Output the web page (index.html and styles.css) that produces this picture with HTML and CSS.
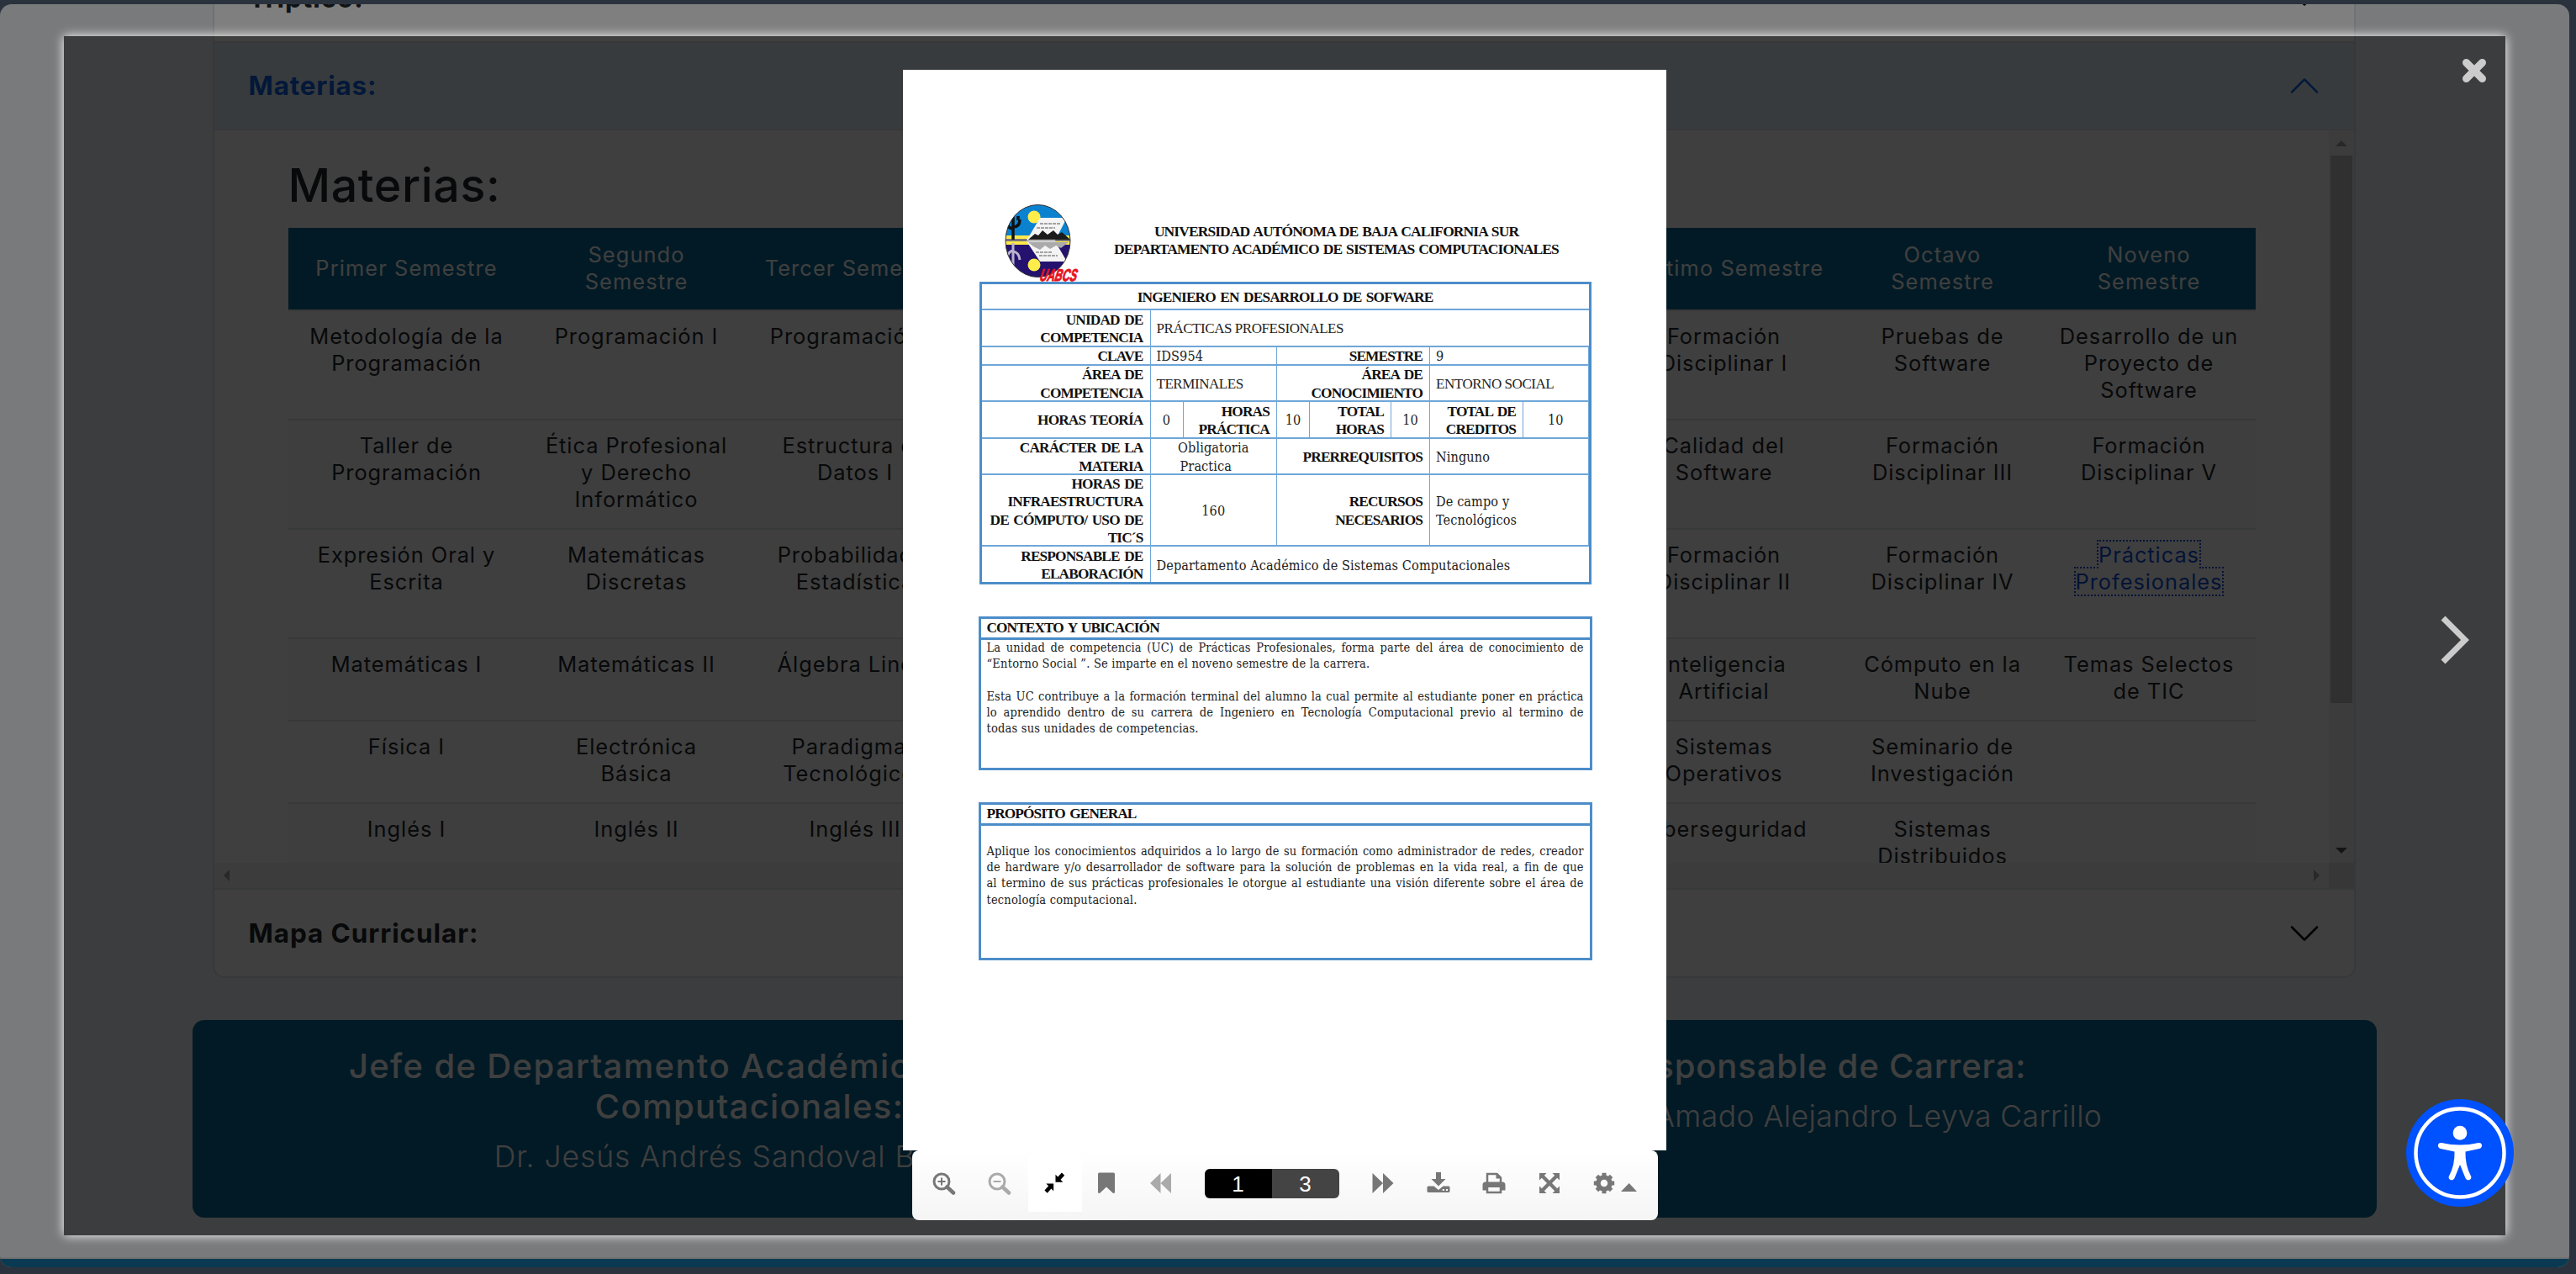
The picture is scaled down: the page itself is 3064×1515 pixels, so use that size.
FILE: index.html
```html
<!DOCTYPE html>
<html lang="es">
<head>
<meta charset="utf-8">
<title>Materias</title>
<link rel="stylesheet" href="styles.css">
</head>
<body>
<div class="site">
  <main class="page">
    <section class="accordion">
      <div class="acc-head"><span>Tríptico:</span>
        <svg class="chev" viewBox="0 0 16 16"><path d="M1.646 4.646a.5.5 0 0 1 .708 0L8 10.293l5.646-5.647a.5.5 0 0 1 .708.708l-6 6a.5.5 0 0 1-.708 0l-6-6a.5.5 0 0 1 0-.708z"/></svg>
      </div>
      <div class="acc-head open"><span>Materias:</span>
        <svg class="chev" viewBox="0 0 16 16"><path d="M1.646 4.646a.5.5 0 0 1 .708 0L8 10.293l5.646-5.647a.5.5 0 0 1 .708.708l-6 6a.5.5 0 0 1-.708 0l-6-6a.5.5 0 0 1 0-.708z"/></svg>
      </div>
      <div class="scroller">
        <div class="content">
          <h2>Materias:</h2>
          <table class="plan">
            <colgroup><col class="c1"><col class="c2"><col class="c3"><col class="c3"><col class="c3"><col class="c3"><col class="c7"><col class="c8"><col class="c9"></colgroup>
            <thead><tr><th>Primer Semestre</th><th>Segundo<br>Semestre</th><th>Tercer Semestre</th><th></th><th></th><th></th><th>Séptimo Semestre</th><th>Octavo<br>Semestre</th><th>Noveno<br>Semestre</th></tr></thead>
            <tbody>
              <tr class="tall"><td>Metodología de la<br>Programación</td><td>Programación I</td><td>Programación II</td><td></td><td></td><td></td><td>Formación<br>Disciplinar I</td><td>Pruebas de<br>Software</td><td>Desarrollo de un<br>Proyecto de<br>Software</td></tr>
              <tr class="tall"><td>Taller de<br>Programación</td><td>Ética Profesional<br>y Derecho<br>Informático</td><td>Estructura de<br>Datos I</td><td></td><td></td><td></td><td>Calidad del<br>Software</td><td>Formación<br>Disciplinar III</td><td>Formación<br>Disciplinar V</td></tr>
              <tr class="tall"><td>Expresión Oral y<br>Escrita</td><td>Matemáticas<br>Discretas</td><td>Probabilidad y<br>Estadística</td><td></td><td></td><td></td><td>Formación<br>Disciplinar II</td><td>Formación<br>Disciplinar IV</td><td><a class="focus" href="#">Prácticas<br>Profesionales</a></td></tr>
              <tr><td>Matemáticas I</td><td>Matemáticas II</td><td>Álgebra Lineal</td><td></td><td></td><td></td><td>Inteligencia<br>Artificial</td><td>Cómputo en la<br>Nube</td><td>Temas Selectos<br>de TIC</td></tr>
              <tr><td>Física I</td><td>Electrónica<br>Básica</td><td>Paradigmas<br>Tecnológicos</td><td></td><td></td><td></td><td>Sistemas<br>Operativos</td><td>Seminario de<br>Investigación</td><td></td></tr>
              <tr><td>Inglés I</td><td>Inglés II</td><td>Inglés III</td><td></td><td></td><td></td><td>Ciberseguridad</td><td>Sistemas<br>Distribuidos</td><td></td></tr>
            </tbody>
          </table>
        </div>
        <div class="vbar"><i class="up"></i><b></b><i class="down"></i></div>
        <div class="hbar"><i class="left"></i><i class="right"></i></div>
        <div class="corner"></div>
      </div>
      <div class="acc-head last"><span>Mapa Curricular:</span>
        <svg class="chev" viewBox="0 0 16 16"><path d="M1.646 4.646a.5.5 0 0 1 .708 0L8 10.293l5.646-5.647a.5.5 0 0 1 .708.708l-6 6a.5.5 0 0 1-.708 0l-6-6a.5.5 0 0 1 0-.708z"/></svg>
      </div>
    </section>
    <section class="staff">
      <div class="person"><h4>Jefe de Departamento Académico de Sistemas<br>Computacionales:</h4><p>Dr. Jesús Andrés Sandoval Bringas</p></div>
      <div class="person lead"><h4>Responsable de Carrera:</h4><p>Dr. Italia Amado Alejandro Leyva Carrillo</p></div>
    </section>
    <div class="footer-line"></div>
  </main>
</div>
<div class="dim"></div>
<div class="lightbox">
  <article class="doc">
    <header class="doc-header">
      <svg class="logo" viewBox="0 0 110 100">
        <defs><clipPath id="oval"><ellipse cx="49.500" cy="48.500" rx="38.500" ry="43"/></clipPath></defs>
        <g clip-path="url(#oval)">
          <rect width="110" height="47" fill="#0a82d0"/>
          <rect y="42" width="110" height="11" fill="#ffe94a"/>
          <rect y="46" width="110" height="3" fill="#777"/>
          <rect y="53" width="110" height="50" fill="#24126e"/>
          <circle cx="45" cy="20" r="7.500" fill="#ffee4a"/>
          <circle cx="45" cy="77" r="7.500" fill="#ffee4a"/>
          <path d="M52 21h32l-14 27H36z" fill="#f4f4f4"/>
          <path d="M36 49h34l14 24H52z" fill="#f4f4f4"/>
          <path d="M38 47l8-7 4 2 5-6 6 5 7-5 5 5 5-3 10 9z" fill="#1b1b1b"/>
          <path d="M38 50h48l-9 7-6-3-7 4-6-4-6 5-8-4z" fill="#aaa"/>
          <path d="M20 47V20M20 34q-7 0-7-9M20 32q8 0 8-9M15 24v-6M26 24v-5" fill="none" stroke="#111" stroke-width="3.500"/>
          <path d="M20 51v26M20 60q-6 1-7 9M20 61q7 1 8 10" fill="none" stroke="#b9b4cc" stroke-width="3"/>
          <path d="M52 28h24M48 33h22M47 62h20M51 66h22" stroke="#888" stroke-width="1.500" stroke-dasharray="4 1"/>
        </g>
        <ellipse cx="49.500" cy="48.500" rx="38.500" ry="43" fill="none" stroke="#333" stroke-width="1"/>
        <text transform="translate(51 96) skewX(-12)" class="logo-text" textLength="44" lengthAdjust="spacingAndGlyphs">UABCS</text>
      </svg>
      <div class="doc-titles"><div>UNIVERSIDAD AUTÓNOMA DE BAJA CALIFORNIA SUR</div><div>DEPARTAMENTO ACADÉMICO DE SISTEMAS COMPUTACIONALES</div></div>
    </header>
    <div class="sheet">
      <div class="k mid s8">INGENIERO EN DESARROLLO DE SOFWARE</div>
      <div class="k">UNIDAD DE<br>COMPETENCIA</div><div class="v caps s7">PRÁCTICAS PROFESIONALES</div>
      <div class="k">CLAVE</div><div class="v s2w">IDS954</div><div class="k s3">SEMESTRE</div><div class="v s2w">9</div>
      <div class="k">ÁREA DE<br>COMPETENCIA</div><div class="v caps s2w">TERMINALES</div><div class="k s3">ÁREA DE<br>CONOCIMIENTO</div><div class="v caps s2w">ENTORNO SOCIAL</div>
      <div class="k">HORAS TEORÍA</div><div class="v mid">0</div><div class="k">HORAS<br>PRÁCTICA</div><div class="v mid">10</div><div class="k">TOTAL<br>HORAS</div><div class="v mid">10</div><div class="k">TOTAL DE<br>CREDITOS</div><div class="v mid">10</div>
      <div class="k">CARÁCTER DE LA<br>MATERIA</div><div class="v mid s2w opt"><span>Obligatoria</span><span class="practice">Practica</span></div><div class="k s3">PRERREQUISITOS</div><div class="v s2w">Ninguno</div>
      <div class="k">HORAS DE<br>INFRAESTRUCTURA<br>DE CÓMPUTO/ USO DE<br>TIC´S</div><div class="v mid s2w">160</div><div class="k s3">RECURSOS<br>NECESARIOS</div><div class="v s2w">De campo y<br>Tecnológicos</div>
      <div class="k">RESPONSABLE DE<br>ELABORACIÓN</div><div class="v s7">Departamento Académico de Sistemas Computacionales</div>
    </div>
    <section class="block context">
      <h5>CONTEXTO Y UBICACIÓN</h5>
      <div class="body">
        <div class="full">La unidad de competencia (UC) de Prácticas Profesionales, forma parte del área de conocimiento de</div>
        <div>“Entorno Social ”. Se imparte en el noveno semestre de la carrera.</div>
        <div class="gap"></div>
        <div class="full">Esta UC contribuye a la formación terminal del alumno la cual permite al estudiante poner en práctica</div>
        <div class="full">lo aprendido dentro de su carrera de Ingeniero en Tecnología Computacional previo al termino de</div>
        <div>todas sus unidades de competencias.</div>
      </div>
    </section>
    <section class="block purpose">
      <h5>PROPÓSITO GENERAL</h5>
      <div class="body">
        <div class="full">Aplique los conocimientos adquiridos a lo largo de su formación como administrador de redes, creador</div>
        <div class="full">de hardware y/o desarrollador de software para la solución de problemas en la vida real, a fin de que</div>
        <div class="full">al termino de sus prácticas profesionales le otorgue al estudiante una visión diferente sobre el área de</div>
        <div>tecnología computacional.</div>
      </div>
    </section>
  </article>
  <nav class="toolbar">
    <svg class="ico" viewBox="0 0 28 27"><circle cx="11" cy="11" r="9" fill="none" stroke="#777" stroke-width="3"/><path d="M17.500 17.500l7.500 7" stroke="#777" stroke-width="4.500" stroke-linecap="round"/><path d="M11 6.500v9M6.500 11h9" stroke="#777" stroke-width="2"/></svg>
    <svg class="ico" viewBox="0 0 28 27"><circle cx="11" cy="11" r="9" fill="none" stroke="#aaa" stroke-width="3"/><path d="M17.500 17.500l7.500 7" stroke="#aaa" stroke-width="4.500" stroke-linecap="round"/><path d="M6.500 11h9" stroke="#aaa" stroke-width="2"/></svg>
    <span class="active"><svg class="ico" viewBox="0 0 28 27"><path d="M14.500 2.500v9.500H24l-3-3 5-5.500L22.500 0l-5 5.500zM2.500 14H12v9.500l-3-3L4 26 .500 22.500l5-5.500z" fill="#000" transform="translate(1 .5) scale(.93)"/></svg></span>
    <svg class="ico mark" viewBox="0 0 28 27"><path d="M4 2q0-1.500 1.500-1.500h17Q24 .5 24 2v22.500l-2 .5-8-7.500L6 25l-2-.5z" fill="#777"/></svg>
    <svg class="ico" viewBox="0 0 28 27"><path d="M13.500 1v24L1 13zM26 1v24L13.500 13z" fill="#aaa"/></svg>
    <div class="pager"><span>1</span><span>3</span></div>
    <svg class="ico" viewBox="0 0 28 27"><path d="M1.500 1v24L14 13zM14 1v24l12.500-12z" fill="#777"/></svg>
    <svg class="ico" viewBox="0 0 28 27"><path d="M11 0h6v8h5.500L14 16.500 5.500 8H11zM2 16.500h6.500L14 21l5.500-4.500H26q1.500 0 1.500 1.500v4.500Q27.500 24 26 24H2Q.5 24 .5 22.500V18Q.5 16.500 2 16.500z" fill="#777"/><path d="M18.800 20h2v2h-2zM23 20h2v2h-2z" fill="#fff"/></svg>
    <svg class="ico" viewBox="0 0 28 27"><path d="M6 12V2h11.500L22 6.500V12" fill="none" stroke="#777" stroke-width="2.500"/><path d="M16.500 1v6.500H23z" fill="#777"/><path d="M4 11.500h20q3.500 0 3.500 3.500v6.500H23V18H5v3.500H.5V15q0-3.500 3.500-3.500z" fill="#777"/><path d="M6 18v6h16v-6" fill="none" stroke="#777" stroke-width="2.500"/></svg>
    <svg class="ico" viewBox="0 0 28 27"><path d="M2 1h8.500L7.800 3.800 14 10l6.200-6.200L17.500 1H26v8.500l-2.800-2.700L17 13l6.200 6.200 2.800-2.700V25h-8.500l2.700-2.800L14 16l-6.200 6.200 2.700 2.800H2v-8.500l2.800 2.700L11 13 4.800 6.800 2 9.500z" fill="#777"/></svg>
    <svg class="cog" viewBox="0 0 54 27"><circle cx="13" cy="13" r="7" fill="none" stroke="#777" stroke-width="5.500"/><path d="M13 .8v5M13 20.200v5M.8 13h5M20.200 13h5M4.400 4.400l3.500 3.500M18.100 18.100l3.500 3.500M4.400 21.600l3.500-3.500M18.100 7.900l3.500-3.500" stroke="#777" stroke-width="5"/><path d="M33 23l9.700-10L52 23z" fill="#777"/></svg>
  </nav>
  <svg class="close" viewBox="0 0 30 30"><path d="M5.500 5.500l19 19M24.500 5.500l-19 19" stroke="#ccc" stroke-width="9" stroke-linecap="round"/></svg>
  <svg class="next" viewBox="0 0 38 60"><path d="M5 4l26 26L5 56" fill="none" stroke="#ccc" stroke-width="7"/></svg>
</div>
<svg class="a11y" viewBox="0 0 128 128"><circle cx="64" cy="64" r="64" fill="#0051ff"/><circle cx="64" cy="64" r="52.500" fill="none" stroke="#fff" stroke-width="4.500"/><ellipse cx="64" cy="40.300" rx="8.300" ry="8.500" fill="#fff"/><path d="M42 52q22 5 44 0c5-1 5.500 6 1 7l-16.500 3.500q-.5 16 6.500 29c2 4.500-4.500 7-6.500 2.500L64 78l-6.500 16c-2 4.500-8.500 2-6.500-2.500q7-13 6.500-29L41 59c-4.500-1-4-8 1-7z" fill="#fff"/></svg>
</body>
</html>
```
FILE: styles.css
```css
*{box-sizing:border-box}
body{margin:0;width:3064px;height:1515px;overflow:hidden;position:relative;font-family:Inter,"Open Sans",sans-serif;color:#212529}
svg{display:block;flex:none}
h2,h4,h5,p{margin:0}

/* page behind the lightbox */
.site{height:1515px;padding:5px 8px 8px 0;background:#55677a;overflow:hidden}
.page{height:1502px;border-radius:14px;overflow:hidden;background:#f3f5f9;display:flex;flex-direction:column}
.accordion{flex:none;width:2549px;margin:-60px 0 0 253px;border:2px solid #dee2e6;border-radius:14px;background:#fff}
.acc-head{height:104px;padding:0 39px 0 40.5px;display:flex;justify-content:space-between;align-items:center;border-bottom:2px solid #dee2e6;font-weight:700;font-size:31.5px;letter-spacing:.9px;color:#212529}
.acc-head span{padding-bottom:1px}
.acc-head.open{background:#e1eef9;color:#0c63e4;letter-spacing:.8px}
.acc-head.last{height:103px;border:0}
.chev{width:40px;height:40px}
.open .chev{fill:#0c63e4;transform:rotate(180deg)}
.scroller{display:grid;grid-template-columns:1fr 30px;grid-template-rows:871px 30px;height:903px;border-bottom:2px solid #dee2e6}
.content{overflow:hidden;padding-left:87.5px}
.content h2{font-weight:500;font-size:55.5px;letter-spacing:.6px;line-height:66px;padding-top:32px;height:116px}
.plan{width:2340px;table-layout:fixed;border-collapse:collapse;font-size:25.4px;line-height:32px;letter-spacing:.95px;text-align:center}
.c1{width:282px}.c2{width:265px}.c3{width:255px}.c7{width:282px}.c8{width:238px}.c9{width:253px}
.plan th{height:98px;padding:0 0 2px;font-weight:400;color:#fff;background:#0a6a96;border-bottom:2px solid #dee2e6;letter-spacing:1.1px}
.plan td{height:98px;padding:14px 0 0;vertical-align:top;border-bottom:2px solid #dee2e6}
.plan .tall td{height:130px}
.plan tbody tr:nth-child(even){background:#fafafa}
.focus{color:#0d4fd8;text-decoration:none;outline:2px dotted #0d4fd8;outline-offset:0}
.vbar{background:#f1f1f1;padding:0 2px;display:flex;flex-direction:column;align-items:center}
.vbar i{height:30px;display:flex;align-items:center}
.vbar i::before,.hbar i::before{content:"";border:7px solid transparent}
.vbar .up::before{border-top:0;border-bottom-color:#a3a3a3}
.vbar b{width:26px;height:651px;background:#c1c1c1}
.vbar .down{margin-top:auto}
.vbar .down::before{border-bottom:0;border-top-color:#505050}
.hbar{background:#f1f1f1;display:flex;justify-content:space-between;padding:0 11px}
.hbar i{display:flex;align-items:center}
.hbar .left::before{border-left:0;border-right-color:#a3a3a3}
.hbar .right::before{border-right:0;border-left-color:#a3a3a3}
.corner{background:#dcdcdc}
.staff{flex:none;width:2598px;height:235px;margin:50px 0 0 229px;padding:31px 26px;border-radius:14px;background:#0a6a96;color:#fff;display:grid;grid-template-columns:1fr 1fr;text-align:center}
.person h4{font-weight:500;font-size:40px;line-height:48px;letter-spacing:1.35px;white-space:nowrap}
.person p{font-weight:300;font-size:35.5px;line-height:44px;letter-spacing:.9px;margin-top:14px;white-space:nowrap}
.lead h4{letter-spacing:.85px}
.lead p{letter-spacing:.45px;padding-right:8px}
.footer-line{margin-top:auto;height:12px;background:#1274a2;border-top:2px solid #e2e4e8}

.dim{position:absolute;inset:0;background:rgba(0,0,0,.5)}
.lightbox{position:absolute;left:76px;top:43px;width:2904px;height:1426px;background:rgba(0,0,0,.5);box-shadow:0 0 12px #fff;padding-top:40px;display:flex;flex-direction:column;align-items:center}

/* document page */
.doc{width:908px;height:1285px;flex:none;margin-right:1px;background:#fff;color:#222;padding-left:91px}
.doc-header{height:252px;padding-top:155px;display:flex}
.logo{width:110px;height:100px;margin-left:20px}
.logo-text{font:italic 700 20px "Liberation Sans",sans-serif;fill:#e8141e;stroke:#e8141e;stroke-width:1}
.doc-titles{width:590px;padding-top:27px;text-align:center;font:700 17.5px/21.3px "Liberation Serif",serif;letter-spacing:-.92px;word-spacing:1.5px;color:#111;white-space:nowrap}
.sheet{width:728px;height:360px;border:3px solid #4c8dc9;display:grid;grid-template-columns:201px 39px 111.500px 39px 97px 46px 111px 1fr;grid-template-rows:30.500px 44px 22px 43px 44px 43px 85px 1fr;background:#fff}
.sheet>div{display:flex;align-items:center;border-bottom:2px solid #6ea6d8;border-right:1.500px solid #6ea6d8;line-height:21.200px;white-space:nowrap;min-width:0;min-height:0;padding-top:3px}
.k{justify-content:flex-end;text-align:right;padding-right:8px;font:700 17.300px "Liberation Serif",serif;letter-spacing:-.85px;word-spacing:2px;color:#111}
.v{padding-left:7px;font:16.100px "DejaVu Serif Condensed","DejaVu Serif",serif;font-stretch:condensed;letter-spacing:.12px}
.v.caps{font-family:"Liberation Serif",serif;font-size:17px;letter-spacing:-.45px}
.sheet .mid{justify-content:center;text-align:center;padding-left:0;padding-right:0}
.sheet .opt{flex-direction:column}
.practice{margin-right:18px}
.s8{grid-column:span 8}.s7{grid-column:span 7}.s2w{grid-column:span 2}.s3{grid-column:span 3}
.sheet .s8,.sheet .s7{border-right:0}
.sheet>div:nth-last-child(-n+2){border-bottom:0}
.block{width:730px;margin-left:-1px;border:3.500px solid #4c8dc9;font:14.500px/19.200px "DejaVu Serif Condensed","DejaVu Serif",serif;font-stretch:condensed}
.block h5{height:25px;padding-left:7px;border-bottom:3.500px solid #4c8dc9;font:700 17.300px/22px "Liberation Serif",serif;letter-spacing:-.9px;word-spacing:2px;color:#111}
.body{padding:0 7px;letter-spacing:.2px;white-space:nowrap}
.full{text-align:justify;text-align-last:justify;letter-spacing:.1px}
.gap{height:19.200px}
.context{margin-top:38px;height:183px}
.purpose{margin-top:38px;height:188px}
.purpose .body{padding-top:21px}

/* viewer toolbar */
.toolbar{flex:none;width:887px;height:83px;border-radius:8px;background:linear-gradient(#fff,#f5f5f5);display:flex;align-items:center;padding:0 0 5px 24.5px;gap:38px}
.ico{width:28px;height:27px}
.active{width:64px;height:68px;margin:0 -22.5px 0 -18.5px;background:#fff;display:flex;align-items:center;justify-content:center}
.mark{margin-right:-1.5px}
.pager{width:160px;height:35px;border-radius:6px;overflow:hidden;display:flex;color:#fff;font:26px/36px "Liberation Sans",sans-serif;text-align:center}
.pager span{flex:1;background:#000}
.pager span+span{background:#444}
.cog{width:54px;height:27px}
.close{position:absolute;left:2852px;top:26px;width:30px;height:30px}
.next{position:absolute;left:2825px;top:688px;width:38px;height:60px}
.a11y{position:absolute;left:2862px;top:1307px;width:128px;height:128px}
```
